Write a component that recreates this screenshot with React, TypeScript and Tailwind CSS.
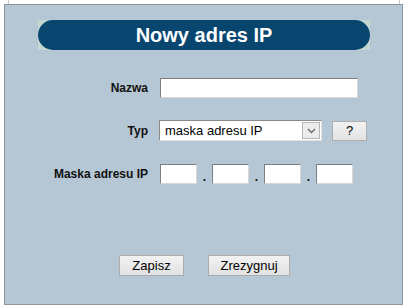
import React from "react";

const font = { fontFamily: '"Liberation Sans", Arial, sans-serif' };

function Field({ w }: { w: string }) {
  return (
    <div
      className={`${w} h-[20px] bg-white border border-t-[#7e7e7e] border-l-[#7e7e7e] border-r-[#d8d8d8] border-b-[#d8d8d8]`}
    />
  );
}

export default function App() {
  return (
    <div className="w-[407px] h-[307px] bg-white overflow-hidden" style={font}>
      {/* top strip */}
      <div className="h-[4px] flex">
        <div className="ml-[8px] w-[392px] h-[4px] border-l border-r border-[#c4c4c4] bg-white" />
      </div>
      {/* panel */}
      <div className="ml-[4px] w-[399px] h-[301px] border border-[#8e959b] bg-[#b5c7d4] flex flex-col">
        {/* title */}
        <div className="mt-[15px] ml-[33px] w-[332px] h-[30px] bg-[#c3d8d1]">
          <div className="w-full h-full rounded-full bg-[#08466f] flex items-center justify-center">
            <span className="text-white font-bold text-[20px] leading-none">Nowy adres IP</span>
          </div>
        </div>

        {/* Nazwa */}
        <div className="mt-[28px] flex items-center">
          <div className="w-[143px] text-right font-bold text-[12px] text-[#111]">Nazwa</div>
          <div className="ml-[12px]">
            <Field w="w-[198px]" />
          </div>
        </div>

        {/* Typ */}
        <div className="mt-[22px] flex items-center">
          <div className="w-[143px] text-right font-bold text-[12px] text-[#111]">Typ</div>
          <div className="ml-[11px] w-[163px] h-[21px] bg-white border border-t-[#8a8a8a] border-l-[#8a8a8a] border-r-[#e0e0e0] border-b-[#e0e0e0] flex items-center">
            <span className="ml-[5px] text-[13px] text-black flex-1 leading-none">maska adresu IP</span>
            <div className="mr-[1px] w-[18px] h-[17px] bg-[#ececec] border border-[#b5b5b5] flex items-center justify-center">
              <svg width="9" height="6" viewBox="0 0 9 6">
                <path d="M1 1 L4.5 4.5 L8 1" fill="none" stroke="#6a6a6a" strokeWidth="1.4" />
              </svg>
            </div>
          </div>
          <div className="ml-[10px] w-[35px] h-[20px] bg-gradient-to-b from-[#f2f2f2] to-[#e3e3e3] border border-[#adadad] flex items-center justify-center text-[13px] text-black leading-none">
            ?
          </div>
        </div>

        {/* Maska */}
        <div className="mt-[21px] flex items-center">
          <div className="w-[143px] text-right font-bold text-[12px] text-[#111]">Maska adresu IP</div>
          <div className="ml-[12px] flex items-center">
            <Field w="w-[37px]" />
            <span className="w-[15px] text-center font-bold text-[12px] text-[#111] pt-[6px]">.</span>
            <Field w="w-[37px]" />
            <span className="w-[15px] text-center font-bold text-[12px] text-[#111] pt-[6px]">.</span>
            <Field w="w-[37px]" />
            <span className="w-[15px] text-center font-bold text-[12px] text-[#111] pt-[6px]">.</span>
            <Field w="w-[37px]" />
          </div>
        </div>

        {/* buttons */}
        <div className="mt-[69px] flex">
          <div className="ml-[114px] w-[65px] h-[21px] bg-gradient-to-b from-[#f2f2f2] to-[#e2e2e2] border border-[#adadad] flex items-center justify-center text-[13px] text-black leading-none">
            Zapisz
          </div>
          <div className="ml-[24px] w-[82px] h-[21px] bg-gradient-to-b from-[#f2f2f2] to-[#e2e2e2] border border-[#adadad] flex items-center justify-center text-[13px] text-black leading-none">
            Zrezygnuj
          </div>
        </div>
      </div>
    </div>
  );
}
